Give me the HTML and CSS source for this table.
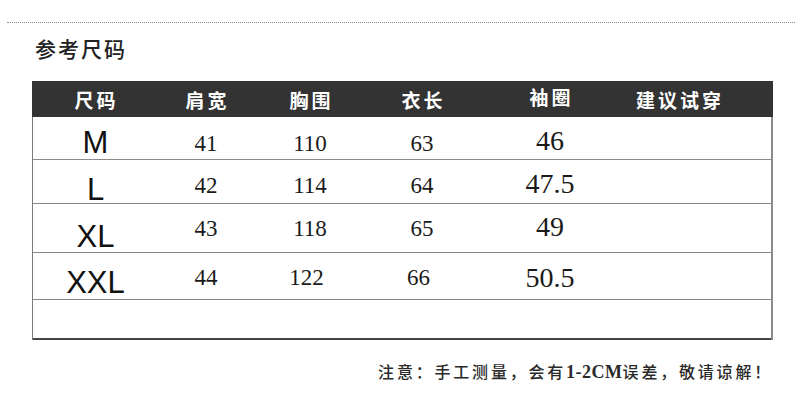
FILE: index.html
```html
<!DOCTYPE html>
<html lang="zh-CN">
<head>
<meta charset="utf-8">
<link rel="stylesheet" href="styles.css">
</head>
<body>
<div class="page">
  <div class="rule"></div>
  <h1 class="title">参考尺码</h1>
  <div class="table">
    <div class="head">
      <div class="hc">尺码</div>
      <div class="hc">肩宽</div>
      <div class="hc">胸围</div>
      <div class="hc">衣长</div>
      <div class="hc hc-up">袖圈</div>
      <div class="hc hc-last">建议试穿</div>
    </div>
    <div class="body">
      <div class="row r1">
        <div class="size">M</div><div class="num">41</div><div class="num">110</div><div class="num">63</div><div class="big">46</div><div></div>
      </div>
      <div class="row r2">
        <div class="size">L</div><div class="num">42</div><div class="num">114</div><div class="num">64</div><div class="big">47.5</div><div></div>
      </div>
      <div class="row r3">
        <div class="size">XL</div><div class="num">43</div><div class="num">118</div><div class="num">65</div><div class="big">49</div><div></div>
      </div>
      <div class="row r4">
        <div class="size">XXL</div><div class="num">44</div><div class="num n-l">122</div><div class="num n-l">66</div><div class="big">50.5</div><div></div>
      </div>
      <div class="row r5 last"></div>
    </div>
  </div>
  <p class="note">注意：手工测量，会有<span class="latin">1-2CM</span>误差，敬请谅解！</p>
</div>
</body>
</html>
```

FILE: styles.css
```css
* { box-sizing: border-box; }
html, body { margin: 0; padding: 0; background: #fff; }
.page {
  width: 800px;
  height: 412px;
  padding-top: 22px;
  font-family: "Noto Sans CJK SC", "Liberation Sans", sans-serif;
  color: #222;
}
.rule {
  margin: 0 5px 0 7px;
  border-top: 1px dotted #8a8a8a;
}
.title {
  margin: 13px 0 0 35px;
  font-size: 21px;
  line-height: 24px;
  font-weight: 500;
  letter-spacing: 2px;
  color: #222;
}
.table {
  margin: 21px 0 0 32px;
  width: 741px;
}
.head {
  display: grid;
  grid-template-columns: 126px 96px 112px 112px 144px 1fr;
  height: 36px;
  padding-top: 2px;
  background: #333;
  color: #fff;
}
.hc {
  text-align: center;
  font-size: 19px;
  line-height: 34px;
  font-weight: 700;
  letter-spacing: 3px;
  padding-left: 3px;
}
.hc-up { margin-top: -3px; }
.hc-last { padding-right: 38px; }
.body {
  border-left: 1px solid #7a7a7a;
  border-right: 2px solid #8a8a8a;
}
.row {
  display: grid;
  grid-template-columns: 125px 96px 112px 112px 144px 1fr;
  align-items: start;
  border-bottom: 1px solid #8a8a8a;
}
.row.last { border-bottom: 2px solid #444; }
.r1 { height: 43px; }
.r2 { height: 44px; }
.r3 { height: 49px; }
.r4 { height: 47px; }
.r5 { height: 40px; }
.size {
  text-align: center;
  font-family: "Liberation Sans", Arial, sans-serif;
  font-size: 31px;
  line-height: 31px;
  color: #111;
}
.num {
  text-align: center;
  font-family: "Liberation Serif", "Times New Roman", serif;
  font-size: 23px;
  line-height: 23px;
  color: #1a1a1a;
}
.big {
  text-align: center;
  font-family: "Liberation Serif", "Times New Roman", serif;
  font-size: 28px;
  line-height: 28px;
  color: #1a1a1a;
}
.n-l { padding-right: 7px; }
.r1 .size { padding-top: 10px; }
.r1 .num { padding-top: 15px; }
.r1 .big { padding-top: 10px; }
.r2 .size { padding-top: 14px; }
.r2 .num { padding-top: 14px; }
.r2 .big { padding-top: 10px; }
.r3 .size { padding-top: 17px; }
.r3 .num { padding-top: 13px; }
.r3 .big { padding-top: 9px; }
.r4 .size { padding-top: 14px; }
.r4 .num { padding-top: 13px; }
.r4 .big { padding-top: 11px; }
.note {
  margin: 21px 27px 0 0;
  text-align: right;
  font-size: 16px;
  line-height: 20px;
  font-weight: 500;
  letter-spacing: 2.8px;
  color: #2a2a2a;
}
.latin {
  font-family: "Liberation Serif", "Times New Roman", serif;
  font-size: 18px;
  letter-spacing: 0.5px;
  font-weight: 700;
}
```
